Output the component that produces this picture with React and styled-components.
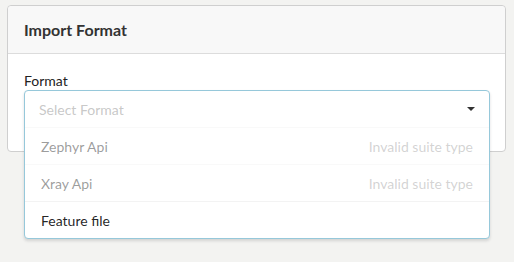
import React from "react";
import styled, { createGlobalStyle } from "styled-components";

const Global = createGlobalStyle`
  html, body { margin: 0; padding: 0; background: #f3f3f1; }
  body { font-family: Lato, "Open Sans", sans-serif; color: rgba(0,0,0,.87); }
  * { box-sizing: border-box; }
`;

const Page = styled.div`
  padding: 5px 8px 0 7px;
  width: 514px;
  height: 262px;
`;

const Card = styled.div`
  width: 499px;
  background: #fff;
  border: 1px solid #cfcfcf;
  border-radius: 4px;
`;

const Header = styled.div`
  height: 48px;
  display: flex;
  align-items: center;
  padding: 0 16px;
  background: #f8f8f8;
  border-bottom: 1px solid #dcdcdc;
  border-radius: 4px 4px 0 0;
  font-size: 16px;
  font-weight: 700;
  color: #333;
`;

const Body = styled.div`
  padding: 17px 16px 24px;
`;

const Label = styled.div`
  font-size: 14px;
  line-height: 19px;
  color: #222;
`;

const SelectWrap = styled.div`
  position: relative;
  height: 37px;
`;

const Dropdown = styled.div`
  position: absolute;
  left: 0;
  top: 0;
  width: 466px;
  background: #fff;
  border: 1px solid #96c8da;
  border-radius: 4px;
  box-shadow: 0 2px 3px 0 rgba(34,36,38,.15);
  z-index: 2;
`;

const Trigger = styled.div`
  height: 36px;
  display: flex;
  align-items: center;
  justify-content: space-between;
  padding: 0 14px 0 14px;
  font-size: 14px;
  color: rgba(191,191,191,.87);
`;

const Caret = styled.span`
  width: 0;
  height: 0;
  border-left: 4px solid transparent;
  border-right: 4px solid transparent;
  border-top: 4px solid rgba(0,0,0,.8);
`;

const Item = styled.div`
  height: 37px;
  display: flex;
  align-items: center;
  justify-content: space-between;
  padding: 0 16px 0 16px;
  border-top: 1px solid #f3f3f3;
  font-size: 14px;
  color: rgba(0,0,0,.87);
  opacity: ${(p) => (p.disabled ? 0.45 : 1)};
`;

const Desc = styled.span`
  color: rgba(0,0,0,.4);
`;

const options = [
  { text: "Zephyr Api", desc: "Invalid suite type", disabled: true },
  { text: "Xray Api", desc: "Invalid suite type", disabled: true },
  { text: "Feature file" },
];

export default function App() {
  return (
    <Page>
      <Global />
      <Card>
        <Header>Import Format</Header>
        <Body>
          <Label>Format</Label>
          <SelectWrap>
            <Dropdown>
              <Trigger>
                <span>Select Format</span>
                <Caret />
              </Trigger>
              {options.map((o) => (
                <Item key={o.text} disabled={o.disabled}>
                  <span>{o.text}</span>
                  {o.desc && <Desc>{o.desc}</Desc>}
                </Item>
              ))}
            </Dropdown>
          </SelectWrap>
        </Body>
      </Card>
    </Page>
  );
}
